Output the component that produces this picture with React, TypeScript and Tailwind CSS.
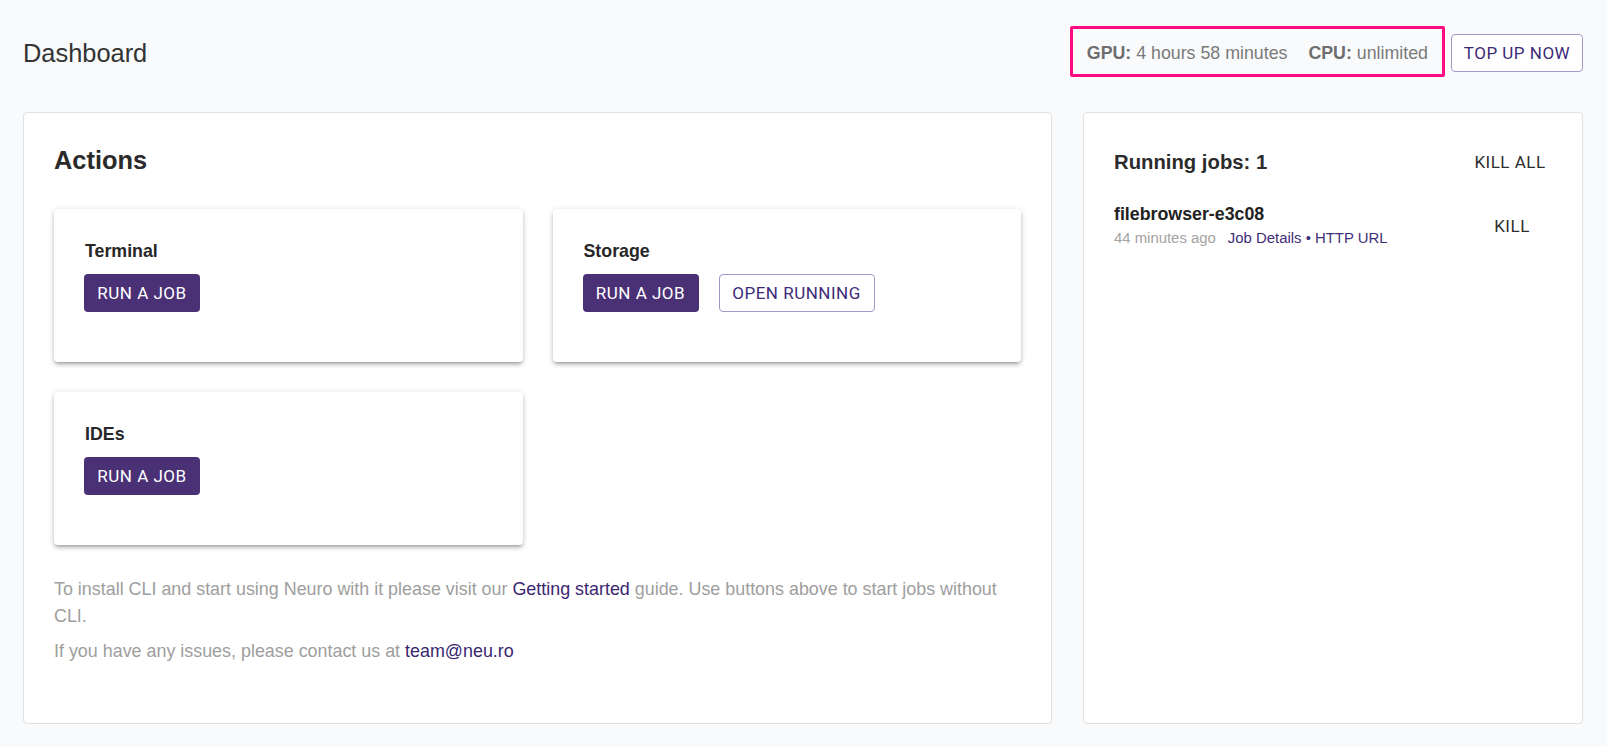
import React from "react";

function RunButton() {
  return (
    <button className="w-[116px] h-[38px] rounded-[4px] bg-[#4a3075] text-white text-[17px] tracking-[0.5px] leading-[38px] font-['Roboto',sans-serif] text-center">
      RUN A JOB
    </button>
  );
}

function ActionCard({ title, extra }: { title: string; extra?: boolean }) {
  return (
    <div className="bg-white rounded-[4px] h-[153px] pt-[32px] pl-[30px] pr-[30px] shadow-[0px_3px_3px_-2px_rgba(0,0,0,0.22),0px_3px_4px_0px_rgba(0,0,0,0.16),0px_1px_7px_0px_rgba(0,0,0,0.12)]">
      <div className="text-[17.8px] leading-[21px] font-bold text-[#272727] ml-[1px]">{title}</div>
      <div className="flex gap-[20px] mt-[12px]">
        <RunButton />
        {extra && (
          <button className="w-[156px] h-[38px] rounded-[4px] border border-[#a397c6] text-[#3d2a78] text-[17px] tracking-[0.5px] leading-[36px] font-['Roboto',sans-serif] text-center bg-white">
            OPEN RUNNING
          </button>
        )}
      </div>
    </div>
  );
}

export default function App() {
  return (
    <div className="min-h-screen bg-[#f9fafc] pl-[23px] pr-[24px] pt-[26px] font-['Liberation_Sans',Arial,sans-serif]">
      <div className="flex justify-between items-start h-[51px]">
        <div className="mt-[12px] text-[25.4px] leading-[30px] text-[#333333]">Dashboard</div>
        <div className="flex items-start gap-[6px]">
          <div className="h-[51px] border-[3px] border-[#ff0a80] rounded-[2px] pt-[13px] pb-[10px] px-[14px] text-[17.8px] leading-[22px] text-[#7a7a7a] flex whitespace-nowrap">
            <span>
              <b className="text-[#6e6e6e]">GPU:</b> 4 hours 58 minutes
            </span>
            <span className="ml-[21px]">
              <b className="text-[#6e6e6e]">CPU:</b> unlimited
            </span>
          </div>
          <button className="mt-[8px] w-[132px] h-[38px] rounded-[4px] border border-[#a397c6] text-[#3d2a78] text-[17px] tracking-[0.5px] leading-[36px] font-['Roboto',sans-serif] text-center bg-white">
            TOP UP NOW
          </button>
        </div>
      </div>

      <div className="flex gap-[31px] mt-[35px] h-[612px]">
        <div className="flex-1 bg-white border border-[#e0e0e0] rounded-[4px] pt-[32px] px-[30px]">
          <h2 className="text-[25.4px] leading-[30px] font-bold text-[#2a2a2a]">Actions</h2>
          <div className="grid grid-cols-2 gap-[30px] mt-[34px]">
            <ActionCard title="Terminal" />
            <ActionCard title="Storage" extra />
            <ActionCard title="IDEs" />
          </div>
          <p className="mt-[31px] text-[17.9px] leading-[26.7px] text-[#9e9e9e]">
            To install CLI and start using Neuro with it please visit our{" "}
            <a className="text-[#3b2670]">Getting started</a> guide. Use buttons above to start jobs without CLI.
          </p>
          <p className="mt-[9px] text-[17.9px] leading-[26.7px] text-[#9e9e9e]">
            If you have any issues, please contact us at <a className="text-[#3b2670]">team@neu.ro</a>
          </p>
        </div>

        <div className="w-[500px] bg-white border border-[#e0e0e0] rounded-[4px] pt-[29px] pl-[30px] pr-[30px]">
          <div className="flex items-center justify-between h-[40px]">
            <div className="text-[20.3px] leading-[24px] font-bold text-[#2b2b2b]">Running jobs: 1</div>
            <button className="w-[84px] h-[36px] leading-[36px] text-[17px] tracking-[0.5px] text-[#2e2e2e] font-['Roboto',sans-serif] text-center">
              KILL ALL
            </button>
          </div>
          <div className="flex items-center justify-between mt-[21px]">
            <div>
              <div className="text-[17.8px] leading-[22px] font-bold text-[#222222]">filebrowser-e3c08</div>
              <div className="text-[14.9px] leading-[20px] mt-[3px] flex">
                <span className="text-[#a3a3a3]">44 minutes ago</span>
                <span className="ml-[12px] text-[#40307a]">Job Details • HTTP URL</span>
              </div>
            </div>
            <button className="w-[80px] h-[36px] leading-[36px] text-[17px] tracking-[0.5px] text-[#2e2e2e] font-['Roboto',sans-serif] text-center">
              KILL
            </button>
          </div>
        </div>
      </div>
    </div>
  );
}
